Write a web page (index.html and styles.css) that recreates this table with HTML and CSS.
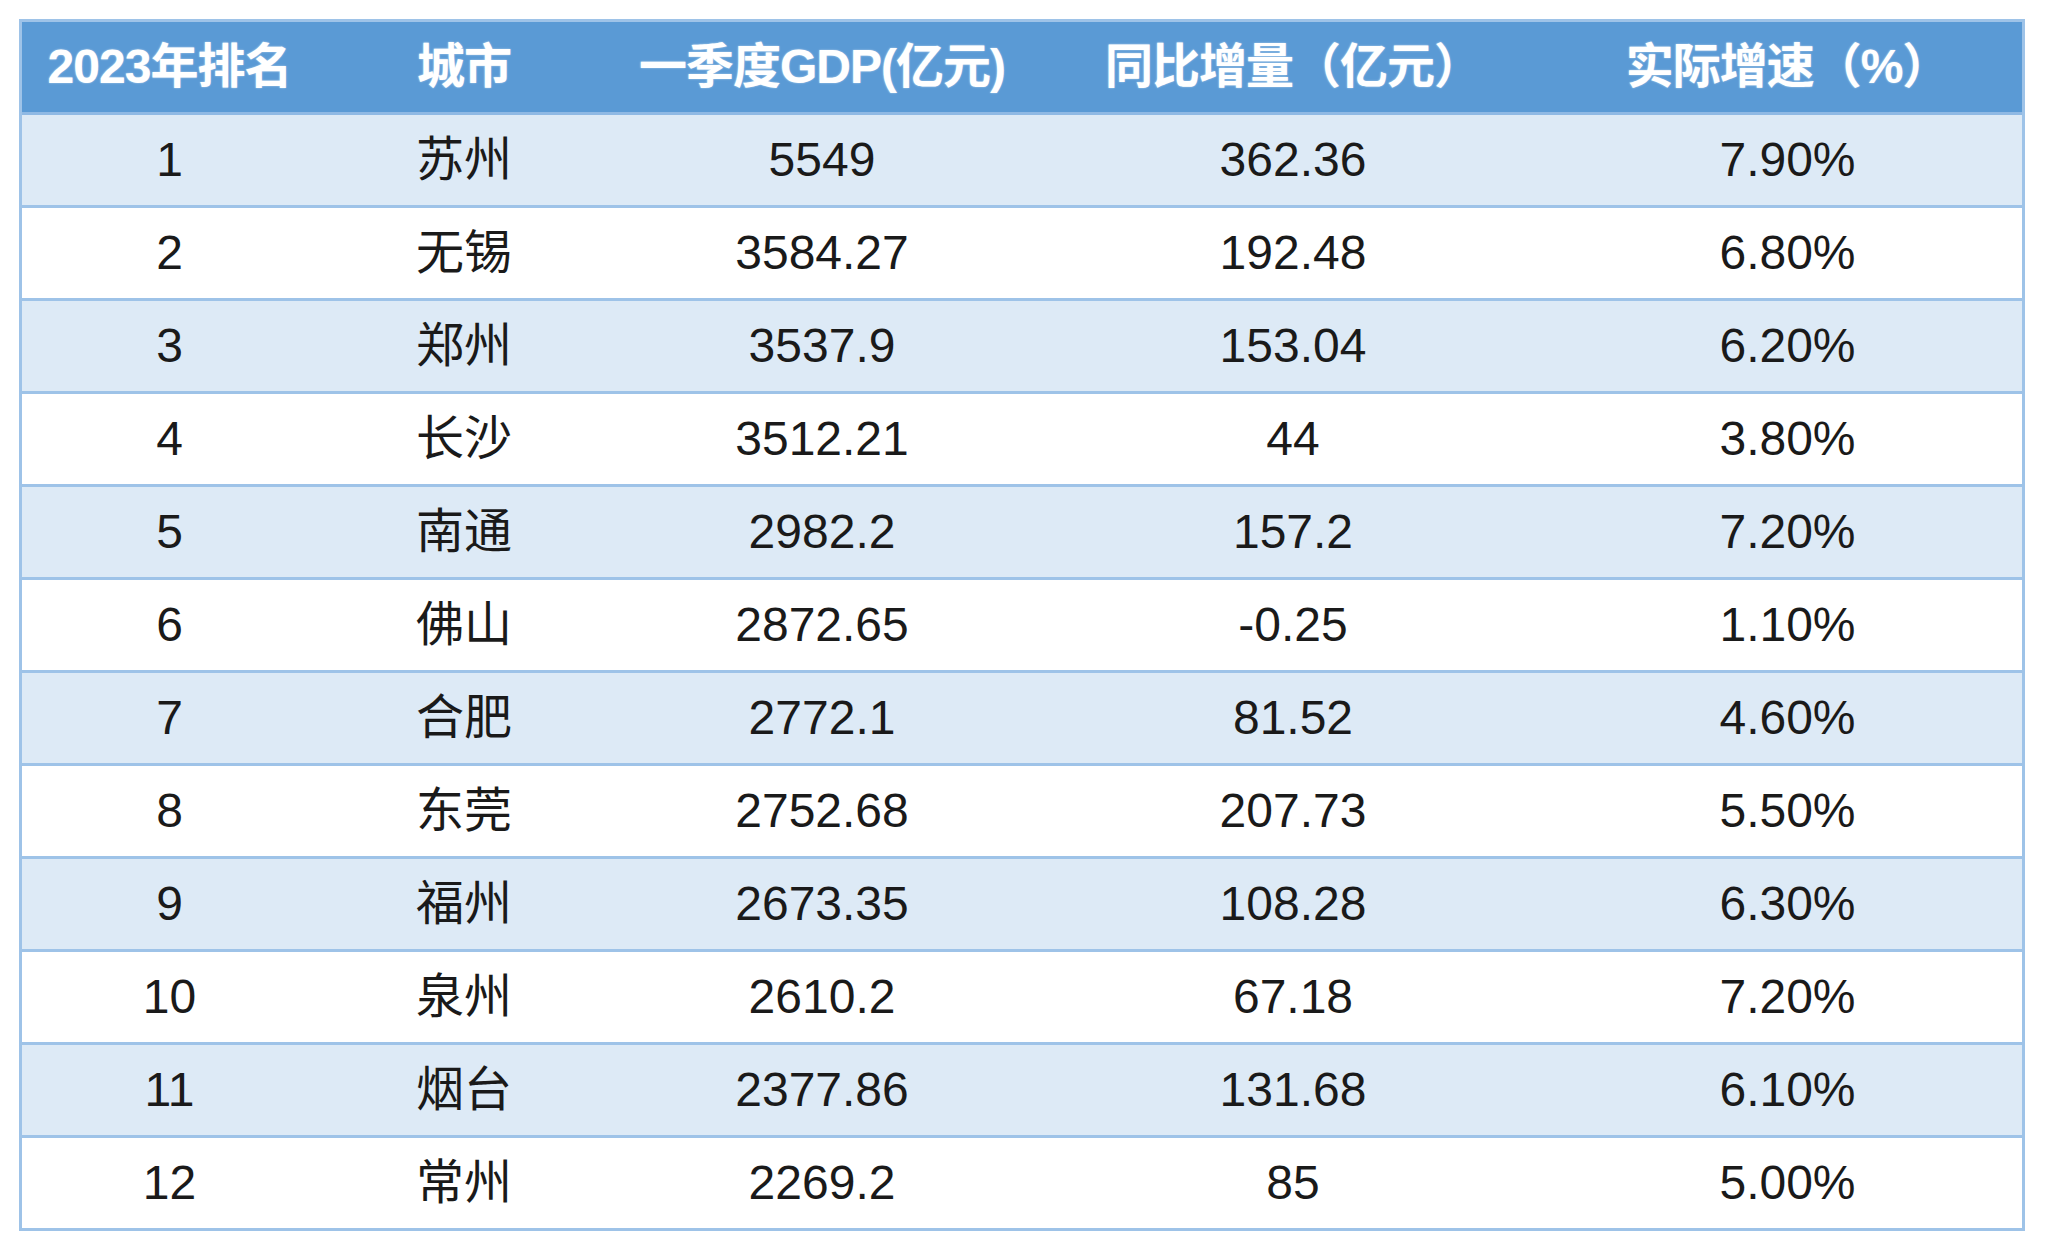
FILE: index.html
```html
<!DOCTYPE html>
<html lang="zh-CN">
<head>
<meta charset="utf-8">
<title>2023年一季度GDP排名</title>
<link rel="stylesheet" href="styles.css">
</head>
<body>
<table class="gdp">
  <colgroup>
    <col class="c1"><col class="c2"><col class="c3"><col class="c4"><col class="c5">
  </colgroup>
  <thead>
    <tr><th>2023年排名</th><th>城市</th><th>一季度GDP(亿元)</th><th>同比增量（亿元）</th><th>实际增速（%）</th></tr>
  </thead>
  <tbody>
    <tr><td>1</td><td>苏州</td><td>5549</td><td>362.36</td><td>7.90%</td></tr>
    <tr><td>2</td><td>无锡</td><td>3584.27</td><td>192.48</td><td>6.80%</td></tr>
    <tr><td>3</td><td>郑州</td><td>3537.9</td><td>153.04</td><td>6.20%</td></tr>
    <tr><td>4</td><td>长沙</td><td>3512.21</td><td>44</td><td>3.80%</td></tr>
    <tr><td>5</td><td>南通</td><td>2982.2</td><td>157.2</td><td>7.20%</td></tr>
    <tr><td>6</td><td>佛山</td><td>2872.65</td><td>-0.25</td><td>1.10%</td></tr>
    <tr><td>7</td><td>合肥</td><td>2772.1</td><td>81.52</td><td>4.60%</td></tr>
    <tr><td>8</td><td>东莞</td><td>2752.68</td><td>207.73</td><td>5.50%</td></tr>
    <tr><td>9</td><td>福州</td><td>2673.35</td><td>108.28</td><td>6.30%</td></tr>
    <tr><td>10</td><td>泉州</td><td>2610.2</td><td>67.18</td><td>7.20%</td></tr>
    <tr><td>11</td><td>烟台</td><td>2377.86</td><td>131.68</td><td>6.10%</td></tr>
    <tr><td>12</td><td>常州</td><td>2269.2</td><td>85</td><td>5.00%</td></tr>
  </tbody>
</table>
</body>
</html>
```
FILE: styles.css
```css
html, body {
  margin: 0;
  padding: 0;
  background: #ffffff;
}
body {
  padding: 19px 0 0 19px;
  font-family: "Liberation Sans", "Noto Sans CJK SC", sans-serif;
  color: #1a1a1a;
}
.gdp {
  border-collapse: separate;
  border-spacing: 0;
  border: 3px solid #9ec3e8;
  table-layout: fixed;
  width: 2006px;
}
.c1 { width: 295px; }
.c2 { width: 294px; }
.c3 { width: 422px; }
.c4 { width: 520px; }
.c5 { width: 469px; }
.gdp th,
.gdp td {
  height: 90px;
  padding: 0;
  text-align: center;
  vertical-align: middle;
  font-size: 48px;
  line-height: 1;
  border-bottom: 3px solid #9ec3e8;
  white-space: nowrap;
}
.gdp th {
  background: #5a9ad5;
  color: #ffffff;
  font-weight: 700;
  letter-spacing: -1px;
  text-shadow: 0 0 2px rgba(255,255,255,0.6);
  border-bottom-color: #8fb9e4;
}
.gdp td {
  font-weight: 400;
}
.gdp tbody tr:nth-child(odd) td {
  background: #ddeaf6;
}
.gdp tbody tr:nth-child(even) td {
  background: #ffffff;
}
.gdp tbody tr:last-child td {
  border-bottom: none;
}
```
